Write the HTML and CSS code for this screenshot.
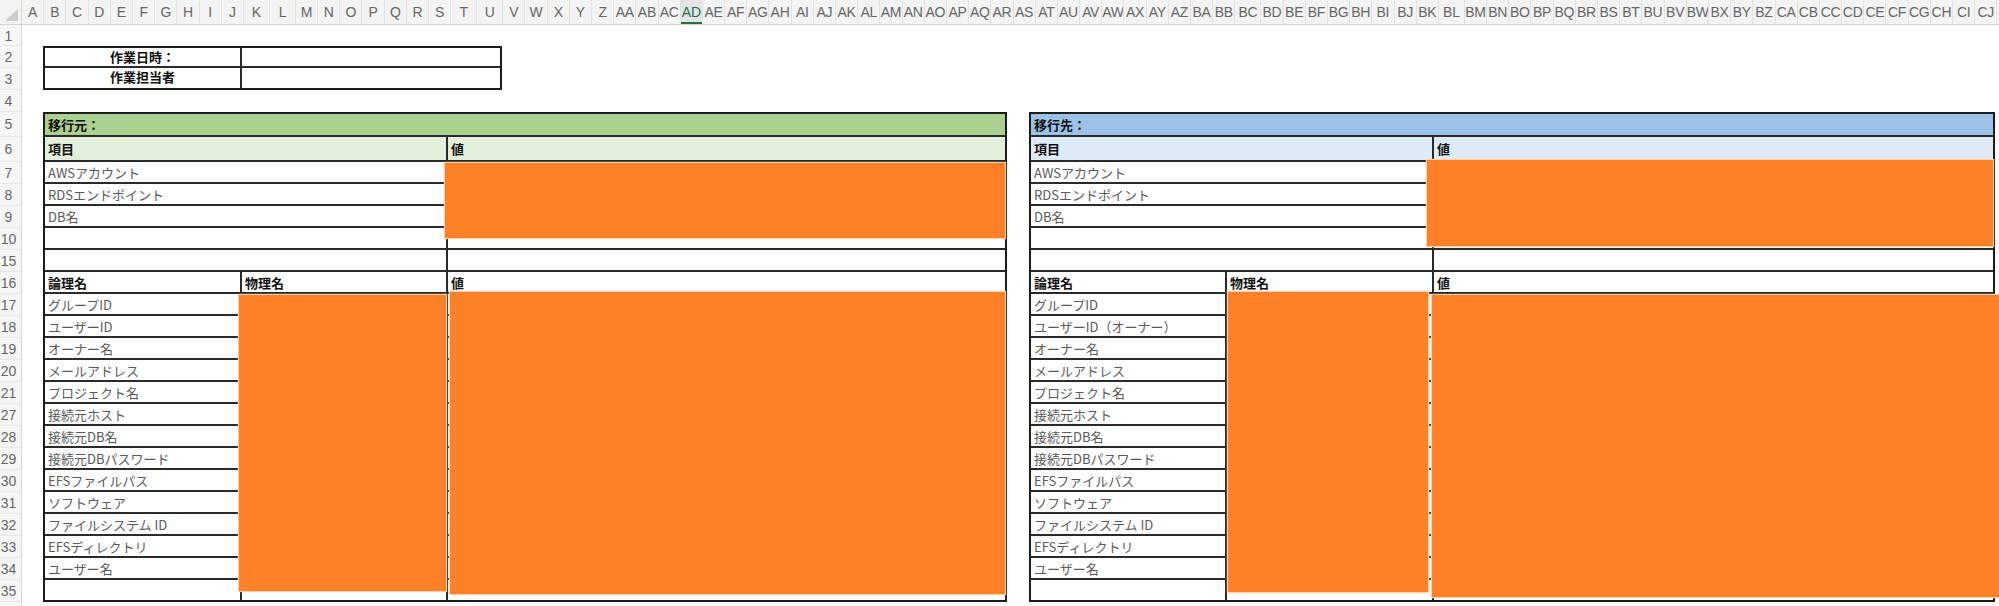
FILE: index.html
```html
<!DOCTYPE html>
<html lang="ja">
<head>
    <meta charset="UTF-8">
    <meta name="viewport" content="width=device-width, initial-scale=1.0">
    <title>DB移行作業シート</title>
    <link rel="stylesheet" href="styles.css">
</head>
<body>

    <!-- column letters -->
    <div class="colhead">
        <div class="corner"><svg width="21" height="24" viewBox="0 0 21 24"><polygon points="18,9 18,21 5,21" fill="#cdcdcd"/></svg></div>
        <span>A</span><span>B</span><span>C</span><span>D</span><span>E</span><span>F</span><span>G</span><span>H</span><span>I</span><span>J</span>
        <span class="wide">K</span><span class="wide">L</span><span>M</span><span>N</span><span>O</span><span>P</span><span>Q</span><span>R</span><span>S</span>
        <span class="wide">T</span><span class="wide">U</span><span>V</span><span>W</span><span>X</span><span>Y</span><span>Z</span>
        <span>AA</span><span>AB</span><span>AC</span><span class="sel">AD</span><span>AE</span><span>AF</span><span>AG</span><span>AH</span><span>AI</span><span>AJ</span>
        <span>AK</span><span>AL</span><span>AM</span><span>AN</span><span>AO</span><span>AP</span><span>AQ</span><span>AR</span><span>AS</span><span>AT</span>
        <span>AU</span><span>AV</span><span>AW</span><span>AX</span><span>AY</span><span>AZ</span>
        <span>BA</span><span>BB</span><span class="wide">BC</span><span>BD</span><span>BE</span><span>BF</span><span>BG</span><span>BH</span><span>BI</span><span>BJ</span>
        <span>BK</span><span class="wide">BL</span><span>BM</span><span>BN</span><span>BO</span><span>BP</span><span>BQ</span><span>BR</span><span>BS</span><span>BT</span>
        <span>BU</span><span>BV</span><span>BW</span><span>BX</span><span>BY</span><span>BZ</span>
        <span>CA</span><span>CB</span><span>CC</span><span>CD</span><span>CE</span><span>CF</span><span>CG</span><span>CH</span><span>CI</span><span>CJ</span><span></span>
    </div>

    <div class="sheet">
        <!-- row numbers -->
        <div class="rownums">
            <div class="rn rn-first">1</div>
            <div class="rn">2</div>
            <div class="rn">3</div>
            <div class="rn">4</div>
            <div class="rn rn-tall">5</div>
            <div class="rn rn-tall">6</div>
            <div class="rn">7</div>
            <div class="rn">8</div>
            <div class="rn">9</div>
            <div class="rn">10</div>
            <div class="rn">15</div>
            <div class="rn">16</div>
            <div class="rn">17</div>
            <div class="rn">18</div>
            <div class="rn">19</div>
            <div class="rn">20</div>
            <div class="rn">21</div>
            <div class="rn">27</div>
            <div class="rn">28</div>
            <div class="rn">29</div>
            <div class="rn">30</div>
            <div class="rn">31</div>
            <div class="rn">32</div>
            <div class="rn">33</div>
            <div class="rn">34</div>
            <div class="rn">35</div>
            <div class="rn"></div>
        </div>

        <div class="cells">
            <div class="info">
                <div class="k top">作業日時：</div><div class="top"></div>
                <div class="k">作業担当者</div><div></div>
            </div>

            <div class="panels">
                <!-- 移行元 -->
                <div class="panel src">
                    <div class="c all title">移行元：</div>
                    <div class="c s2 head">項目</div><div class="c v head">値</div>
                    <div class="c s2">AWSアカウント</div><div class="c v"></div>
                    <div class="c s2">RDSエンドポイント</div><div class="c v"></div>
                    <div class="c s2">DB名</div><div class="c v"></div>
                    <div class="c s2"></div><div class="c v"></div>
                    <div class="c s2"></div><div class="c v"></div>
                    <div class="c b">論理名</div><div class="c b">物理名</div><div class="c v b">値</div>
                    <div class="c">グループID</div><div class="c"></div><div class="c v"></div>
                    <div class="c">ユーザーID</div><div class="c"></div><div class="c v"></div>
                    <div class="c">オーナー名</div><div class="c"></div><div class="c v"></div>
                    <div class="c">メールアドレス</div><div class="c"></div><div class="c v"></div>
                    <div class="c">プロジェクト名</div><div class="c"></div><div class="c v"></div>
                    <div class="c">接続元ホスト</div><div class="c"></div><div class="c v"></div>
                    <div class="c">接続元DB名</div><div class="c"></div><div class="c v"></div>
                    <div class="c">接続元DBパスワード</div><div class="c"></div><div class="c v"></div>
                    <div class="c">EFSファイルパス</div><div class="c"></div><div class="c v"></div>
                    <div class="c">ソフトウェア</div><div class="c"></div><div class="c v"></div>
                    <div class="c">ファイルシステム ID</div><div class="c"></div><div class="c v"></div>
                    <div class="c">EFSディレクトリ</div><div class="c"></div><div class="c v"></div>
                    <div class="c">ユーザー名</div><div class="c"></div><div class="c v"></div>
                    <div class="c end"></div><div class="c end"></div><div class="c v end"></div>

                    <div class="redact r-top"></div>
                    <div class="redact r-phys"></div>
                    <div class="redact r-val"></div>
                </div>

                <!-- 移行先 -->
                <div class="panel dst">
                    <div class="c all title">移行先：</div>
                    <div class="c s2 head">項目</div><div class="c v head">値</div>
                    <div class="c s2">AWSアカウント</div><div class="c v"></div>
                    <div class="c s2">RDSエンドポイント</div><div class="c v"></div>
                    <div class="c s2">DB名</div><div class="c v"></div>
                    <div class="c s2"></div><div class="c v"></div>
                    <div class="c s2"></div><div class="c v"></div>
                    <div class="c b">論理名</div><div class="c b">物理名</div><div class="c v b">値</div>
                    <div class="c">グループID</div><div class="c"></div><div class="c v"></div>
                    <div class="c">ユーザーID（オーナー）</div><div class="c"></div><div class="c v"></div>
                    <div class="c">オーナー名</div><div class="c"></div><div class="c v"></div>
                    <div class="c">メールアドレス</div><div class="c"></div><div class="c v"></div>
                    <div class="c">プロジェクト名</div><div class="c"></div><div class="c v"></div>
                    <div class="c">接続元ホスト</div><div class="c"></div><div class="c v"></div>
                    <div class="c">接続元DB名</div><div class="c"></div><div class="c v"></div>
                    <div class="c">接続元DBパスワード</div><div class="c"></div><div class="c v"></div>
                    <div class="c">EFSファイルパス</div><div class="c"></div><div class="c v"></div>
                    <div class="c">ソフトウェア</div><div class="c"></div><div class="c v"></div>
                    <div class="c">ファイルシステム ID</div><div class="c"></div><div class="c v"></div>
                    <div class="c">EFSディレクトリ</div><div class="c"></div><div class="c v"></div>
                    <div class="c">ユーザー名</div><div class="c"></div><div class="c v"></div>
                    <div class="c end"></div><div class="c end"></div><div class="c v end"></div>

                    <div class="redact r-top"></div>
                    <div class="redact r-phys"></div>
                    <div class="redact r-val"></div>
                </div>
            </div>
        </div>
    </div>

</body>
</html>
```

FILE: styles.css
```css
* {
    box-sizing: border-box;
}
body {
    margin: 0;
    width: 1999px;
    height: 606px;
    overflow: hidden;
    background: #fff;
    font-family: "Noto Sans CJK JP", "Noto Sans", sans-serif;
}

/* column letters */
.colhead {
    display: flex;
    height: 25px;
    background: #f3f3f3;
    border-bottom: 1px solid #d2d2d2;
    font-family: "Liberation Sans", Arial, sans-serif;
    font-size: 14px;
    color: #666;
}
.corner {
    flex: none;
    width: 22px;
    border-right: 1px solid #dcdcdc;
}
.corner svg {
    display: block;
}
.colhead span {
    flex: none;
    width: 22.2px;
    border-right: 1px solid #e2e2e2;
    text-align: center;
    line-height: 24px;
    white-space: nowrap;
    overflow: hidden;
    letter-spacing: -0.3px;
}
.colhead span.wide {
    width: 26px;
}
.colhead span.sel {
    color: #217346;
    background: #e4e4e4;
    box-shadow: inset 0 -2px #217346;
}

/* row numbers */
.sheet {
    display: flex;
}
.rownums {
    flex: none;
    width: 22px;
    background: #f6f6f6;
    border-right: 1px solid #d6d6d6;
    font-family: "Liberation Sans", Arial, sans-serif;
    font-size: 14px;
    color: #666;
}
.rn {
    height: 22px;
    line-height: 22px;
    padding-right: 4px;
    text-align: center;
    border-bottom: 1px solid #e6e6e6;
}
.rn-first {
    height: 21px;
}
.rn-tall {
    height: 25px;
    line-height: 25px;
}

.cells {
    flex: 1;
    padding-left: 21px;
    padding-top: 21px;
}

/* 作業日時 / 担当者 */
.info {
    display: grid;
    grid-template-columns: 197px 1fr;
    grid-template-rows: 20px 20px;
    width: 459px;
    border: 2px solid #1c1c1c;
    font-size: 13px;
    color: #111;
}
.info .top {
    border-bottom: 2px solid #2a2a2a;
}
.info .k {
    border-right: 2px solid #2a2a2a;
    font-weight: bold;
    text-align: center;
    line-height: 18px;
}

/* 移行元 / 移行先 */
.panels {
    display: flex;
    gap: 22px;
    margin-top: 22px;
}
.panel {
    position: relative;
    display: grid;
    grid-template-columns: 197px 206px 1fr;
    grid-template-rows: 23px 25px repeat(19, 22px) 20px;
    border: 2px solid #1c1c1c;
}
.src {
    width: 964px;
}
.dst {
    width: 966px;
    grid-template-columns: 196px 207px 1fr;
}
.c {
    display: flex;
    align-items: center;
    padding-left: 3px;
    border-right: 2px solid #2a2a2a;
    border-bottom: 2px solid #2a2a2a;
    font-size: 13px;
    color: #595959;
    white-space: nowrap;
    overflow: hidden;
}
.c.v {
    border-right: none;
}
.c.s2 {
    grid-column: span 2;
}
.c.all {
    grid-column: 1 / -1;
    border-right: none;
}
.c.end {
    border-bottom: none;
}
.c.b,
.c.head,
.c.title {
    font-weight: bold;
    color: #111;
}
.src .title {
    background: #a9d08e;
}
.src .head {
    background: #e2efda;
}
.dst .title {
    background: #9bc2e6;
}
.dst .head {
    background: #ddebf7;
}

/* redacted values */
.redact {
    position: absolute;
    background: #fe8127;
    box-shadow: 0 0 1px 1px #ffd2ae;
}
.src .r-top {
    left: 400px;
    top: 49px;
    width: 560px;
    height: 75px;
}
.src .r-phys {
    left: 194px;
    top: 181px;
    width: 207px;
    height: 296px;
}
.src .r-val {
    left: 405px;
    top: 178px;
    width: 555px;
    height: 302px;
}
.dst .r-top {
    left: 396px;
    top: 46px;
    width: 566px;
    height: 86px;
}
.dst .r-phys {
    left: 197px;
    top: 178px;
    width: 200px;
    height: 300px;
}
.dst .r-val {
    left: 401px;
    top: 181px;
    width: 570px;
    height: 302px;
}
```
